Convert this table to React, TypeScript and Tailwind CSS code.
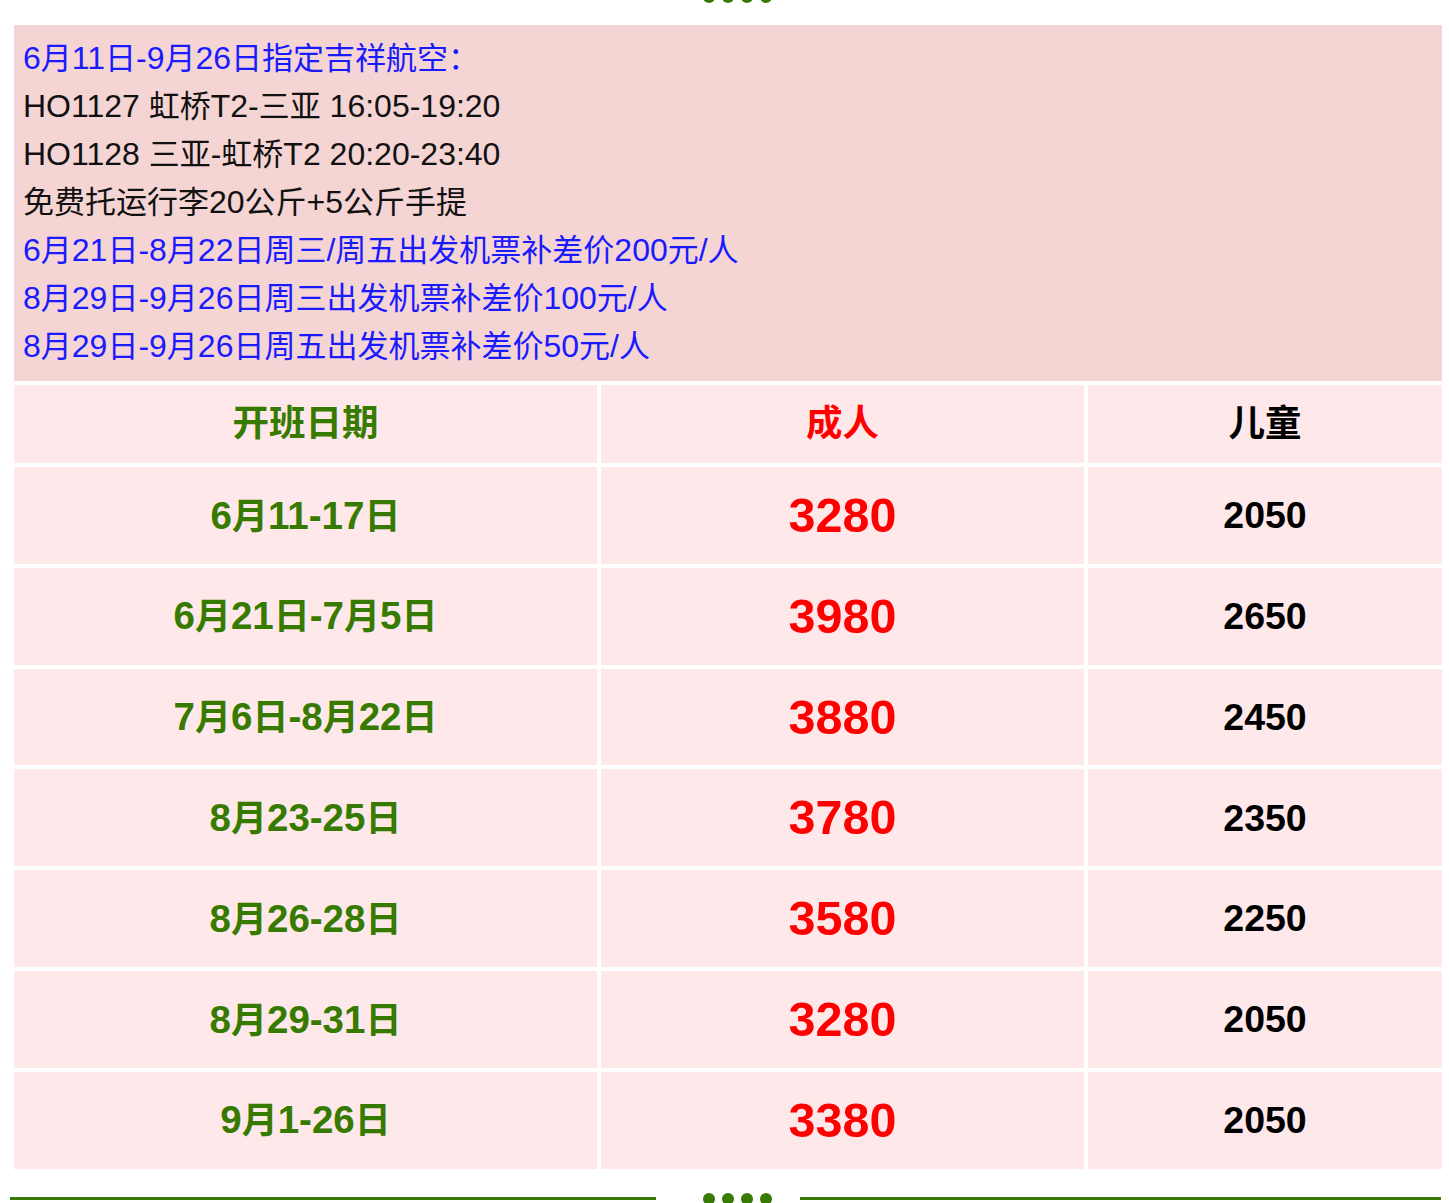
import React from "react";

const rows = [
  { d: "6月11-17日", a: "3280", c: "2050" },
  { d: "6月21日-7月5日", a: "3980", c: "2650" },
  { d: "7月6日-8月22日", a: "3880", c: "2450" },
  { d: "8月23-25日", a: "3780", c: "2350" },
  { d: "8月26-28日", a: "3580", c: "2250" },
  { d: "8月29-31日", a: "3280", c: "2050" },
  { d: "9月1-26日", a: "3380", c: "2050" },
];

function Mixed({ text, latin }: { text: string; latin: string }) {
  const parts = text.split(/([\u4e00-\u9fff\uff1a]+)/).filter((p) => p.length > 0);
  return (
    <>
      {parts.map((p, i) =>
        /[\u4e00-\u9fff\uff1a]/.test(p) ? (
          <span key={i}>{p}</span>
        ) : (
          <span key={i} className={latin}>
            {p}
          </span>
        )
      )}
    </>
  );
}

function Divider() {
  return (
    <div className="flex items-center h-[12px] pl-[10px] pr-[8px]">
      <div className="w-[646px] h-[3px] bg-[#367b00]" />
      <div className="ml-[47px] flex gap-[7px]">
        <div className="w-3 h-3 rounded-full bg-[#367b00]" />
        <div className="w-3 h-3 rounded-full bg-[#367b00]" />
        <div className="w-3 h-3 rounded-full bg-[#367b00]" />
        <div className="w-3 h-3 rounded-full bg-[#367b00]" />
      </div>
      <div className="ml-[28px] flex-1 h-[3px] bg-[#367b00]" />
    </div>
  );
}

const infoLines: { t: string; blue: boolean }[] = [
  { t: "6月11日-9月26日指定吉祥航空：", blue: true },
  { t: "HO1127 虹桥T2-三亚 16:05-19:20", blue: false },
  { t: "HO1128 三亚-虹桥T2 20:20-23:40", blue: false },
  { t: "免费托运行李20公斤+5公斤手提", blue: false },
  { t: "6月21日-8月22日周三/周五出发机票补差价200元/人", blue: true },
  { t: "8月29日-9月26日周三出发机票补差价100元/人", blue: true },
  { t: "8月29日-9月26日周五出发机票补差价50元/人", blue: true },
];

export default function App() {
  return (
    <div className="w-[1449px] h-[1203px] overflow-hidden bg-white font-['Liberation_Sans','Noto_Sans_CJK_SC',sans-serif]">
      <div className="h-[25px] overflow-hidden">
        <div className="-mt-[9px]">
          <Divider />
        </div>
      </div>
      <div className="ml-[14px] w-[1428px]">
        <div className="bg-[#f5d4d4] pl-[9px] pt-[9px] pb-[11px] text-[31px] leading-[48px] text-[#111]">
          {infoLines.map((l, i) => (
            <div key={i} className={"h-[48px] flex items-center whitespace-pre " + (l.blue ? "text-[#1a1aff]" : "")}>
              <span className="leading-none">
                <Mixed text={l.t} latin="text-[32px]" />
              </span>
            </div>
          ))}
        </div>
        <div className="mt-[4px] grid grid-cols-[583px_483px_354px] gap-[4px] font-bold">
          <div className="h-[78px] bg-[#fee8ea] flex items-center justify-center text-[36.5px] text-[#367b00]">开班日期</div>
          <div className="h-[78px] bg-[#fee8ea] flex items-center justify-center text-[36.5px] text-[#ff0000]">成人</div>
          <div className="h-[78px] bg-[#fee8ea] flex items-center justify-center text-[36.5px] text-[#000]">儿童</div>
          {rows.map((r, i) => (
            <React.Fragment key={i}>
              <div className="h-[96.8px] bg-[#fee8ea] flex items-center justify-center text-[36px] text-[#367b00]">
                <span>
                  <Mixed text={r.d} latin="text-[38.5px]" />
                </span>
              </div>
              <div className="h-[96.8px] bg-[#fee8ea] flex items-center justify-center text-[48.5px] text-[#ff0000]">{r.a}</div>
              <div className="h-[96.8px] bg-[#fee8ea] flex items-center justify-center text-[37.5px] text-[#000]">{r.c}</div>
            </React.Fragment>
          ))}
        </div>
      </div>
      <div className="mt-[24px]">
        <Divider />
      </div>
    </div>
  );
}
